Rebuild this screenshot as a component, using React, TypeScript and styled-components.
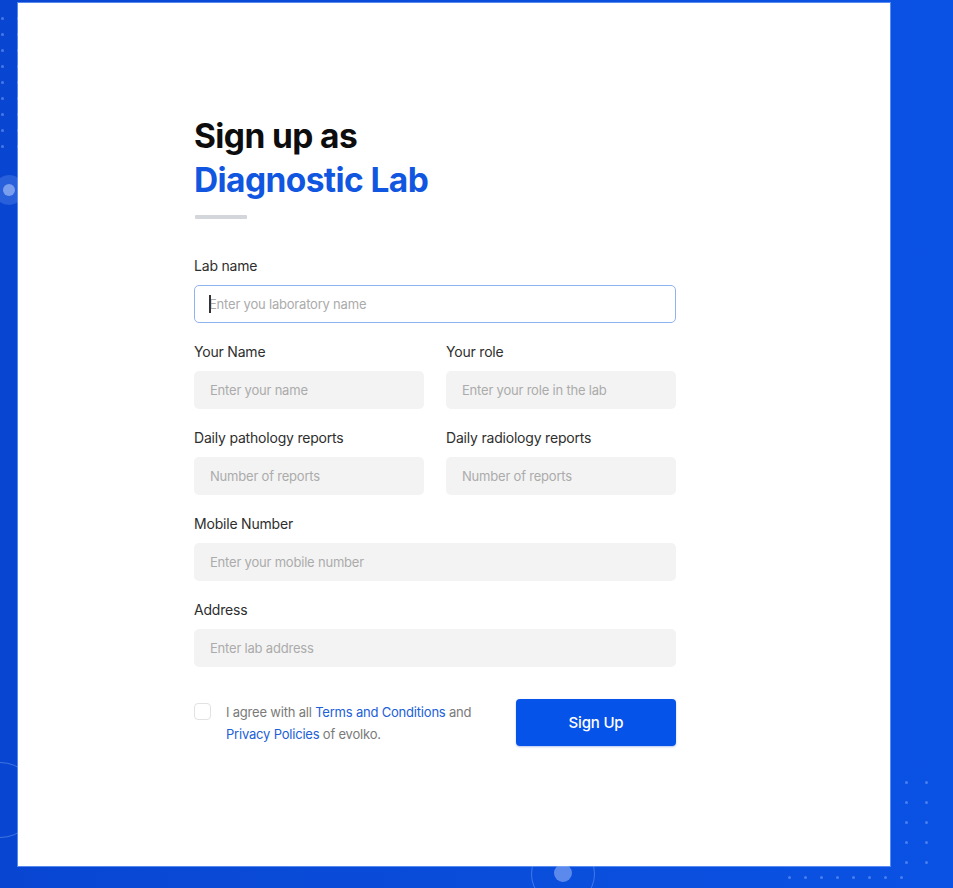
import React from "react";
import styled, { createGlobalStyle } from "styled-components";

const Global = createGlobalStyle`
  html, body { margin: 0; padding: 0; }
  body { font-family: "Inter", "Noto Sans", sans-serif; }
  * { box-sizing: border-box; }
`;

const Page = styled.div`
  position: relative;
  width: 953px;
  height: 888px;
  overflow: hidden;
  background: linear-gradient(90deg, #0846d2 0%, #0a4edc 60%, #0a52e4 100%);
  padding: 3px 63px 22px 18px;
`;

const Card = styled.main`
  position: relative;
  z-index: 1;
  height: 100%;
  background: #ffffff;
  box-shadow: 0 0 0 1px rgba(140, 180, 255, 0.6);
  padding: 111px 0 0 176px;
`;

const Form = styled.form`
  width: 482px;
  display: flex;
  flex-direction: column;
`;

const Title = styled.h1`
  margin: 0;
  font-family: "Inter", sans-serif;
  font-weight: 700;
  font-size: 33.5px;
  line-height: 44px;
  letter-spacing: -0.6px;
  color: #0d0d0d;
`;

const Accent = styled.span`
  display: block;
  color: #1156e0;
`;

const Divider = styled.div`
  width: 52px;
  height: 4px;
  margin: 13px 0 38px 1px;
  background: #d3d6db;
  border-radius: 1px;
`;

const Row = styled.div`
  display: grid;
  grid-template-columns: 230px 230px;
  column-gap: 22px;
  margin-bottom: 20px;
`;

const Field = styled.label<{ $wide?: boolean }>`
  display: flex;
  flex-direction: column;
  grid-column: ${(p) => (p.$wide ? "1 / -1" : "auto")};
`;

const LabelText = styled.span`
  font-family: "Inter", sans-serif;
  font-size: 14px;
  line-height: 18px;
  color: #2e2e2e;
  letter-spacing: -0.2px;
  margin-bottom: 10px;
`;

const Input = styled.input<{ $focused?: boolean }>`
  height: 38px;
  width: 100%;
  border-radius: 5px;
  border: ${(p) => (p.$focused ? "1.5px solid #8fb2f0" : "1px solid transparent")};
  background: ${(p) => (p.$focused ? "#ffffff" : "#f3f3f3")};
  padding: 0 ${(p) => (p.$focused ? "14px" : "15px")};
  font-family: "Inter", sans-serif;
  font-size: 13px;
  color: #333;
  outline: none;
  letter-spacing: -0.2px;
  &::placeholder {
    color: #ababab;
  }
`;

const Caret = styled.span`
  position: absolute;
  left: 15px;
  top: 10px;
  width: 2px;
  height: 18px;
  background: #333;
`;

const InputWrap = styled.div`
  position: relative;
`;

const Bottom = styled.div`
  display: flex;
  justify-content: space-between;
  align-items: flex-start;
  margin-top: 12px;
`;

const Agree = styled.div`
  display: flex;
  gap: 15px;
  padding-top: 4px;
`;

const Box = styled.span`
  flex: none;
  width: 17px;
  height: 17px;
  border: 1.5px solid #e2e2e2;
  border-radius: 4px;
  background: #fff;
`;

const AgreeText = styled.p`
  margin: 0;
  width: 260px;
  font-family: "Inter", sans-serif;
  font-size: 13px;
  line-height: 22px;
  color: #7a7a7a;
  letter-spacing: -0.2px;
  margin-top: -2px;
`;

const Link = styled.a`
  color: #2060d8;
  text-decoration: none;
`;

const Button = styled.button`
  width: 160px;
  height: 47px;
  border: none;
  border-radius: 4px;
  background: #0653ea;
  color: #fff;
  font-family: "Inter", sans-serif;
  font-size: 15px;
  font-weight: 500;
  letter-spacing: -0.2px;
  box-shadow: 0 1px 2px rgba(0, 60, 200, 0.3);
`;

const DotGrid = styled.div<{ $cols: number; $gap: number }>`
  position: absolute;
  display: grid;
  grid-template-columns: repeat(${(p) => p.$cols}, 3px);
  gap: ${(p) => p.$gap}px;
  & > span {
    width: 3px;
    height: 3px;
    border-radius: 50%;
    background: rgba(150, 185, 255, 0.45);
  }
`;

const Ring = styled.div<{ $size: number }>`
  position: absolute;
  width: ${(p) => p.$size}px;
  height: ${(p) => p.$size}px;
  border-radius: 50%;
  border: 1px solid rgba(170, 200, 255, 0.35);
`;

const Blob = styled.div<{ $size: number; $alpha: number }>`
  position: absolute;
  width: ${(p) => p.$size}px;
  height: ${(p) => p.$size}px;
  border-radius: 50%;
  background: rgba(190, 210, 255, ${(p) => p.$alpha});
`;

const dots = (n: number) => Array.from({ length: n }, (_, i) => <span key={i} />);

export default function App() {
  return (
    <Page>
      <Global />
      <DotGrid $cols={2} $gap={13} style={{ left: 1, top: 17 }}>{dots(18)}</DotGrid>
      <Blob $size={30} $alpha={0.18} style={{ left: -6, top: 175 }} />
      <Blob $size={12} $alpha={0.55} style={{ left: 3, top: 184 }} />
      <Ring $size={76} style={{ left: -38, top: 762 }} />
      <DotGrid $cols={2} $gap={17} style={{ left: 905, top: 781 }}>{dots(10)}</DotGrid>
      <DotGrid $cols={8} $gap={13} style={{ left: 788, top: 876 }}>{dots(8)}</DotGrid>
      <Ring $size={64} style={{ left: 531, top: 842 }} />
      <Blob $size={18} $alpha={0.45} style={{ left: 554, top: 864 }} />
      <Card>
        <Form onSubmit={(e) => e.preventDefault()}>
          <Title>
            Sign up as
            <Accent>Diagnostic Lab</Accent>
          </Title>
          <Divider />
          <Row>
            <Field $wide>
              <LabelText>Lab name</LabelText>
              <InputWrap>
                <Input $focused placeholder="Enter you laboratory name" />
                <Caret />
              </InputWrap>
            </Field>
          </Row>
          <Row>
            <Field>
              <LabelText>Your Name</LabelText>
              <Input placeholder="Enter your name" />
            </Field>
            <Field>
              <LabelText>Your role</LabelText>
              <Input placeholder="Enter your role in the lab" />
            </Field>
          </Row>
          <Row>
            <Field>
              <LabelText>Daily pathology reports</LabelText>
              <Input placeholder="Number of reports" />
            </Field>
            <Field>
              <LabelText>Daily radiology reports</LabelText>
              <Input placeholder="Number of reports" />
            </Field>
          </Row>
          <Row>
            <Field $wide>
              <LabelText>Mobile Number</LabelText>
              <Input placeholder="Enter your mobile number" />
            </Field>
          </Row>
          <Row>
            <Field $wide>
              <LabelText>Address</LabelText>
              <Input placeholder="Enter lab address" />
            </Field>
          </Row>
          <Bottom>
            <Agree>
              <Box />
              <AgreeText>
                I agree with all <Link href="#">Terms and Conditions</Link> and{" "}
                <Link href="#">Privacy Policies</Link> of evolko.
              </AgreeText>
            </Agree>
            <Button type="submit">Sign Up</Button>
          </Bottom>
        </Form>
      </Card>
    </Page>
  );
}
